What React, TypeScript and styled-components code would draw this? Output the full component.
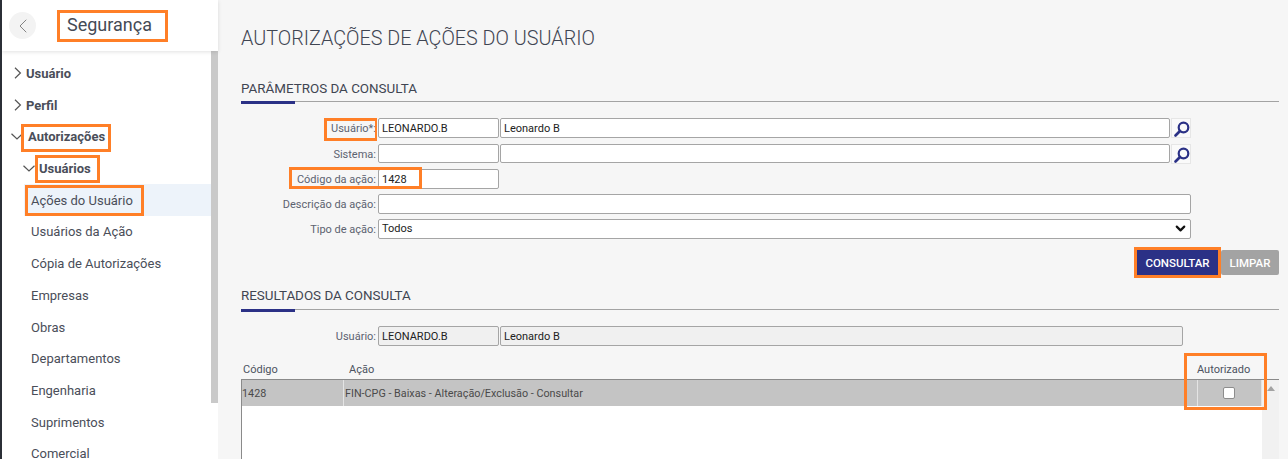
import React from "react";
import styled, { createGlobalStyle } from "styled-components";
import { ChevronDown, ChevronLeft } from "lucide-react";

const GlobalStyle = createGlobalStyle`
    html, body {
        margin: 0;
        height: 459px;
        overflow: hidden;
        background: #f6f6f6;
        font-family: Roboto, "Liberation Sans", sans-serif;
    }
    * {
        box-sizing: border-box;
    }
`;

interface MarkProps {
    $t?: number;
    $r?: number;
    $b?: number;
    $l?: number;
    $thinRight?: boolean;
}

// orange box drawn over the screenshot parts being pointed at
const Mark = styled.span<MarkProps>`
    position: relative;
    display: inline-block;

    &::after {
        content: "";
        position: absolute;
        top: ${props => -(props.$t ?? 4)}px;
        right: ${props => -(props.$r ?? 4)}px;
        bottom: ${props => -(props.$b ?? 4)}px;
        left: ${props => -(props.$l ?? 4)}px;
        border: 3px solid #ff7f27;
        border-right-width: ${props => (props.$thinRight ? 2 : 3)}px;
        pointer-events: none;
        z-index: 5;
    }
`;

const Page = styled.div`
    display: flex;
    width: 1288px;
    height: 459px;
    overflow: hidden;
    border-left: 2px solid #2b2f36;
`;

const Sidebar = styled.aside`
    width: 216px;
    flex-shrink: 0;
    background: #fff;
    display: flex;
    flex-direction: column;
`;

const SideHeader = styled.header`
    height: 51px;
    flex-shrink: 0;
    display: flex;
    align-items: center;
    padding: 0 0 0 7px;
    gap: 31px;
    box-shadow: 0 1px 4px rgba(0, 0, 0, 0.12);
    position: relative;
    z-index: 1;
`;

const BackButton = styled.div`
    width: 27px;
    height: 27px;
    border-radius: 50%;
    background: #f3f3f3;
    color: #777;
    display: flex;
    align-items: center;
    justify-content: center;
`;

const SideTitle = styled.h1`
    margin: 0;
    font-size: 18px;
    font-weight: 400;
    color: #444a55;
    line-height: 22px;
    position: relative;
    top: -1px;
`;

const SideBody = styled.div`
    flex: 1;
    display: flex;
    min-height: 0;
`;

const Menu = styled.nav`
    flex: 1;
    padding-top: 6.5px;
    min-width: 0;
`;

const MenuRow = styled.div<{ $indent: number; $bold?: boolean; $active?: boolean }>`
    height: 31.72px;
    display: flex;
    align-items: center;
    margin-left: ${props => (props.$active ? 22 : 0)}px;
    padding-left: ${props => (props.$active ? props.$indent - 22 : props.$indent)}px;
    background: ${props => (props.$active ? "#edf3fa" : "transparent")};
    font-size: 13px;
    font-weight: ${props => (props.$bold ? 700 : 400)};
    color: #4a4e59;
    white-space: nowrap;
`;

const Caret = styled.svg<{ $gap: number }>`
    flex-shrink: 0;
    margin-right: ${props => props.$gap}px;
    fill: none;
    stroke: #555;
    stroke-width: 1.2;
`;

const ScrollTrack = styled.div`
    width: 7px;
    flex-shrink: 0;
`;

const ScrollThumb = styled.div`
    height: 352px;
    background: #c9c9c9;
`;

const Main = styled.main`
    flex: 1;
    min-width: 0;
    padding: 27px 9px 0 23px;
`;

const PageTitle = styled.h2`
    margin: 0 0 29px;
    font-size: 19.8px;
    line-height: 24px;
    font-weight: 300;
    color: #3f4552;
`;

const SectionHead = styled.div`
    height: 22px;
    font-size: 13.4px;
    line-height: 18px;
    color: #3f4552;
    border-bottom: 1px solid #a3a3a3;
    position: relative;

    &::after {
        content: "";
        position: absolute;
        left: 0;
        bottom: -3px;
        width: 54px;
        height: 3px;
        background: #2b3186;
    }
`;

const Form = styled.div`
    display: flex;
    flex-direction: column;
    gap: 5px;
    padding-top: 16px;
    width: 950px;
`;

const FormRow = styled.div`
    display: flex;
    align-items: flex-start;
    gap: 1px;
    height: 20px;

    ${Form} > &:first-child {
        margin-bottom: 1px;
    }
`;

const Label = styled.label`
    width: 135px;
    margin-right: 1px;
    padding-top: 4px;
    flex-shrink: 0;
    text-align: right;
    font-size: 11px;
    color: #5c6270;
`;

const Field = styled.input<{ $w: number; $short?: boolean; $readOnlyLook?: boolean }>`
    width: ${props => props.$w}px;
    height: ${props => (props.$short ? 19 : 20)}px;
    flex-shrink: 0;
    padding: 0 3px;
    border: 1px solid #a5a5a5;
    border-radius: 2px;
    background: ${props => (props.$readOnlyLook ? "#f0f0f0" : "#fff")};
    font-family: inherit;
    font-size: 11px;
    color: #222;
    outline: none;
`;

const SearchButton = styled.button`
    width: 20px;
    height: 20px;
    padding: 0;
    border: 1px solid #e6e6e6;
    background: #fafafa;
    display: flex;
    align-items: center;
    justify-content: center;
`;

const SelectBox = styled.div`
    width: 813px;
    height: 20px;
    padding: 0 3px 1px;
    border: 1px solid #a5a5a5;
    border-radius: 2px;
    background: #fff;
    display: flex;
    align-items: center;
    justify-content: space-between;
    font-size: 11px;
    color: #222;

    svg {
        color: #111;
        margin-right: -1px;
    }
`;

const Actions = styled.div`
    display: flex;
    justify-content: flex-end;
    gap: 3px;
    margin: 11px 0 0;
`;

const ActionButton = styled.button<{ $primary?: boolean }>`
    display: block;
    height: 25px;
    width: ${props => (props.$primary ? 81 : 58)}px;
    border: none;
    border-radius: ${props => (props.$primary ? 0 : 2)}px;
    background: ${props => (props.$primary ? "#2b3186" : "#a3a3a3")};
    color: #fff;
    font-family: inherit;
    font-size: 11.5px;
    font-weight: 500;
    padding: 0;
`;

const ResultsHead = styled(SectionHead)`
    height: 23px;
    margin-top: 12px;
`;

const ResultUser = styled(FormRow)`
    margin-top: 16px;
`;

const TableHead = styled.div`
    display: grid;
    grid-template-columns: 106px 848px 65px;
    width: 1021px;
    height: 20px;
    margin-top: 13px;
    font-size: 11px;
    color: #4c5260;
    align-items: center;
`;

const HeadCell = styled.div`
    padding-left: 2px;
`;

const TableWrap = styled.div`
    display: flex;
    width: 1038px;
    height: 90px;
    border-top: 1px solid #8a8a8a;
`;

const TableBody = styled.div`
    width: 1021px;
    flex-shrink: 0;
    background: #fff;
    border-left: 1px solid #8a8a8a;
`;

const DataRow = styled.div`
    display: grid;
    grid-template-columns: 102px 854px 64px;
    height: 26px;
    background: #c4c4c4;
    font-size: 10.8px;
    color: #4a4a4a;
`;

const DataCell = styled.div<{ $pad?: number; $center?: boolean }>`
    display: flex;
    align-items: center;
    justify-content: ${props => (props.$center ? "center" : "flex-start")};
    padding-left: ${props => props.$pad ?? 0}px;
    padding-right: ${props => (props.$center ? 2 : 0)}px;
    border-right: 1px solid #e4e4e4;
`;

const CheckBox = styled.span`
    width: 12px;
    height: 12px;
    border: 1px solid #8d8d8d;
    border-radius: 2px;
    background: #fff;
`;

const TableScroll = styled.div`
    flex: 1;
    background: #f1f1f1;
    display: flex;
    justify-content: center;
    padding-top: 6px;
`;

const ScrollArrow = styled.span`
    width: 0;
    height: 0;
    border-left: 4px solid transparent;
    border-right: 4px solid transparent;
    border-bottom: 5px solid #a3a3a3;
`;

const CaretRight = () => (
    <Caret $gap={4} width="8" height="12" viewBox="0 0 8 12">
        <path d="M1 0.8 L6.4 6 L1 11.2" />
    </Caret>
);

const CaretDown = ({ gap }: { gap: number }) => (
    <Caret $gap={gap} width="12" height="7" viewBox="0 0 12 7">
        <path d="M0.5 0.7 L6 6 L11.5 0.7" />
    </Caret>
);

const SearchIcon = () => (
    <svg width="17" height="17" viewBox="0 0 17 17" fill="none" stroke="#2b3186">
        <circle cx="10.5" cy="7.5" r="4.8" strokeWidth="2.2" />
        <path d="M7 11 L2.5 15.5" strokeWidth="2.6" strokeLinecap="round" />
    </svg>
);

const App: React.FC = () => {
    return (
        <>
            <GlobalStyle />
            <Page>
                <Sidebar>
                    <SideHeader>
                        <BackButton>
                            <ChevronLeft size={24} strokeWidth={0.9} />
                        </BackButton>
                        <SideTitle>
                            <Mark $t={4} $r={16} $b={6} $l={10}>Segurança</Mark>
                        </SideTitle>
                    </SideHeader>
                    <SideBody>
                        <Menu>
                            <MenuRow $indent={12} $bold>
                                <CaretRight />
                                Usuário
                            </MenuRow>
                            <MenuRow $indent={12} $bold>
                                <CaretRight />
                                Perfil
                            </MenuRow>
                            <MenuRow $indent={9} $bold>
                                <CaretDown gap={5} />
                                <Mark $t={5} $r={6} $b={8} $l={7}>Autorizações</Mark>
                            </MenuRow>
                            <MenuRow $indent={21} $bold>
                                <CaretDown gap={4} />
                                <Mark $t={6} $r={9} $b={7} $l={4}>Usuários</Mark>
                            </MenuRow>
                            <MenuRow $indent={29} $active>
                                <Mark $t={8} $r={11} $b={8} $l={6}>Ações do Usuário</Mark>
                            </MenuRow>
                            <MenuRow $indent={29}>Usuários da Ação</MenuRow>
                            <MenuRow $indent={29}>Cópia de Autorizações</MenuRow>
                            <MenuRow $indent={29}>Empresas</MenuRow>
                            <MenuRow $indent={29}>Obras</MenuRow>
                            <MenuRow $indent={29}>Departamentos</MenuRow>
                            <MenuRow $indent={29}>Engenharia</MenuRow>
                            <MenuRow $indent={29}>Suprimentos</MenuRow>
                            <MenuRow $indent={29}>Comercial</MenuRow>
                        </Menu>
                        <ScrollTrack>
                            <ScrollThumb />
                        </ScrollTrack>
                    </SideBody>
                </Sidebar>
                <Main>
                    <PageTitle>AUTORIZAÇÕES DE AÇÕES DO USUÁRIO</PageTitle>
                    <SectionHead>PARÂMETROS DA CONSULTA</SectionHead>
                    <Form>
                        <FormRow>
                            <Label>
                                <Mark $t={4} $r={1} $b={6} $l={7} $thinRight>Usuário*:</Mark>
                            </Label>
                            <Field $w={121} defaultValue="LEONARDO.B" />
                            <Field $w={670} defaultValue="Leonardo B" />
                            <SearchButton><SearchIcon /></SearchButton>
                        </FormRow>
                        <FormRow>
                            <Label>Sistema:</Label>
                            <Field $w={121} $short />
                            <Field $w={670} $short />
                            <SearchButton><SearchIcon /></SearchButton>
                        </FormRow>
                        <FormRow>
                            <Label>
                                <Mark $t={6} $r={46} $b={3} $l={8}>Código da ação:</Mark>
                            </Label>
                            <Field $w={121} defaultValue="1428" />
                        </FormRow>
                        <FormRow>
                            <Label>Descrição da ação:</Label>
                            <Field $w={813} />
                        </FormRow>
                        <FormRow>
                            <Label>Tipo de ação:</Label>
                            <SelectBox>
                                Todos
                                <ChevronDown size={15} strokeWidth={3.5} />
                            </SelectBox>
                        </FormRow>
                    </Form>
                    <Actions>
                        <Mark $t={3} $r={3} $b={3} $l={3}>
                            <ActionButton $primary>CONSULTAR</ActionButton>
                        </Mark>
                        <ActionButton>LIMPAR</ActionButton>
                    </Actions>
                    <ResultsHead>RESULTADOS DA CONSULTA</ResultsHead>
                    <ResultUser>
                        <Label>Usuário:</Label>
                        <Field $w={121} $readOnlyLook defaultValue="LEONARDO.B" readOnly />
                        <Field $w={683} $readOnlyLook defaultValue="Leonardo B" readOnly />
                    </ResultUser>
                    <TableHead>
                        <HeadCell>Código</HeadCell>
                        <HeadCell>Ação</HeadCell>
                        <HeadCell>
                            <Mark $t={10} $r={17} $b={34} $l={13}>Autorizado</Mark>
                        </HeadCell>
                    </TableHead>
                    <TableWrap>
                        <TableBody>
                            <DataRow>
                                <DataCell>1428</DataCell>
                                <DataCell $pad={1}>FIN-CPG - Baixas - Alteração/Exclusão - Consultar</DataCell>
                                <DataCell $center><CheckBox /></DataCell>
                            </DataRow>
                        </TableBody>
                        <TableScroll><ScrollArrow /></TableScroll>
                    </TableWrap>
                </Main>
            </Page>
        </>
    );
};

export default App;
